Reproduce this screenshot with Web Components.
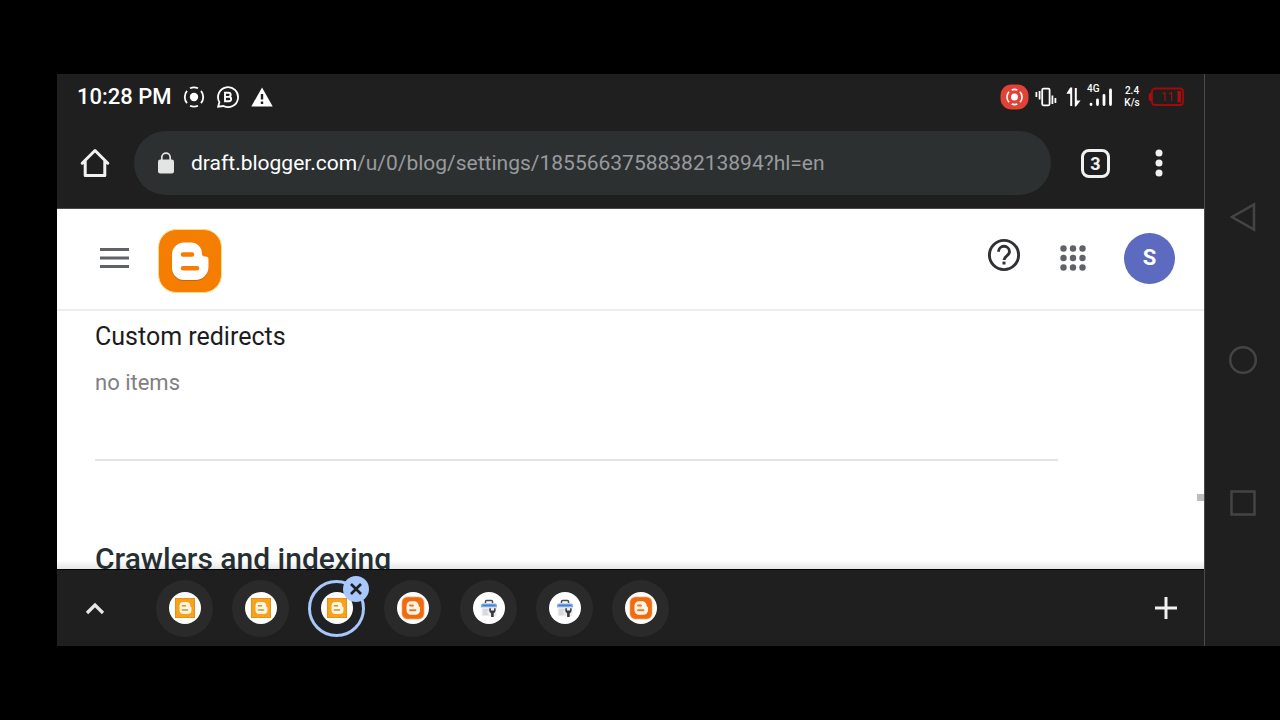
<!DOCTYPE html>
<html lang="en">
<head>
<meta charset="utf-8">
<meta name="viewport" content="width=device-width, initial-scale=1">
<title>Blogger settings</title>
<style>
html, body { margin: 0; height: 100%; background: #000; }
body { font-family: Roboto, "Liberation Sans", sans-serif; }
</style>
</head>
<body>
<phone-screen>
  <status-bar></status-bar>
  <browser-toolbar host="draft.blogger.com" path="/u/0/blog/settings/1855663758838213894?hl=en" tabs="3"></browser-toolbar>
  <blogger-page>
    <blogger-header slot="header" initial="S"></blogger-header>
    <setting-item heading="Custom redirects">no items</setting-item>
    <section-title>Crawlers and indexing</section-title>
  </blogger-page>
  <tab-strip>
    <tab-chip icon="draft" label="Blogger draft"></tab-chip>
    <tab-chip icon="draft" label="Blogger draft"></tab-chip>
    <tab-chip icon="draft" label="Blogger settings" selected></tab-chip>
    <tab-chip icon="blogger" label="Blogger"></tab-chip>
    <tab-chip icon="console" label="Search Console"></tab-chip>
    <tab-chip icon="console" label="Search Console"></tab-chip>
    <tab-chip icon="blogger" label="Blogger"></tab-chip>
  </tab-strip>
  <system-nav slot="nav"></system-nav>
</phone-screen>

<script>
const base = `
  :host, *, *::before, *::after { box-sizing: border-box; }
  button { font: inherit; color: inherit; background: none; border: 0; margin: 0; padding: 0; display: grid; place-items: center; cursor: pointer; }
  svg { display: block; }
`;

function define(name, render) {
  customElements.define(name, class extends HTMLElement {
    constructor() {
      super();
      this.attachShadow({ mode: 'open' });
    }
    connectedCallback() {
      const t = document.createElement('template');
      const [css, html] = render(this);
      t.innerHTML = `<style>${base}${css}</style>${html}`;
      this.shadowRoot.replaceChildren(t.content.cloneNode(true));
    }
  });
}

define('phone-screen', () => [`
  :host { display: flex; height: 100vh; padding: 74px 0 74px 57px; }
  main { flex: 1; min-width: 0; display: flex; flex-direction: column; background: #1f1f1f; }
`, `<main><slot></slot></main><slot name="nav"></slot>`]);

define('status-bar', () => [`
  :host { display: flex; align-items: center; justify-content: space-between; height: 46px; flex: none; padding: 0 20px; color: #fff; }
  div { display: flex; align-items: center; }
  .left { gap: 11px; }
  time { font-size: 22px; font-weight: 500; line-height: 28px; }
  .rate { display: block; font-size: 10px; line-height: 12px; font-weight: 500; text-align: center; width: 18px; margin: 0 7px 0 10px; }
  .vibrate { margin: 0 9px 0 6px; }
  .cell { position: relative; width: 26px; height: 24px; margin-left: 6px; }
  .cell span { position: absolute; top: -2px; left: 0; font-size: 10px; line-height: 12px; font-weight: 500; }
  .battery { position: relative; }
  .battery span { position: absolute; inset: 0 8px 0 11px; font-size: 12px; line-height: 20px; color: #a80b0b; text-align: center; }
`, `
  <div class="left">
    <time>10:28 PM</time>
    <svg width="22" height="22" viewBox="0 0 22 22" fill="none" stroke="#fff" stroke-width="1.8"><circle cx="11" cy="11" r="4.2" fill="#fff" stroke="none"/><path d="M7 2.200A9.700 9.700 0 0 1 15 2.200M18 4.800A9.700 9.700 0 0 1 18 17.200M15 19.800A9.700 9.700 0 0 1 7 19.800M4 4.800A9.700 9.700 0 0 0 4 17.200"/></svg>
    <svg width="24" height="24" viewBox="0 0 24 24" fill="none" stroke="#fff" stroke-width="1.8"><path d="M2.200 21.600l1.200-4.500A10 10 0 1 1 7.500 21z"/><path d="M9 7.800h3.600a2 2 0 0 1 0 4.100H9zM9 11.900h4a2.100 2.100 0 0 1 0 4.300H9z" stroke-width="1.9"/></svg>
    <svg width="22" height="20" viewBox="0 0 22 20"><path fill="#fff" d="M11 .5 21.700 19.400H.3z"/><path stroke="#1f1f1f" stroke-width="2.4" d="M11 7v5.500M11 14.500v2.400"/></svg>
  </div>
  <div>
    <svg width="29" height="26" viewBox="0 0 29 26"><rect x=".5" y=".5" width="28" height="25" rx="11" fill="#e04236"/><circle cx="14.5" cy="13" r="3.5" fill="#fff"/><g fill="none" stroke="#fff" stroke-width="1.600"><path d="M11.700 5.900a7.600 7.600 0 0 1 5.600 0M20 7.800a7.600 7.600 0 0 1 0 10.400M17.300 20.100a7.600 7.600 0 0 1-5.600 0M9 7.800a7.600 7.600 0 0 0 0 10.400"/></g></svg>
    <svg class="vibrate" width="22" height="20" viewBox="0 0 22 20" fill="none" stroke="#fff" stroke-width="1.8"><rect x="7.200" y="1.700" width="7.400" height="16.600" rx="1.200"/><path d="M1.400 5v5M4.600 4v8.500M17.400 8.500V17M20.400 11v5"/></svg>
    <svg width="15" height="20" viewBox="0 0 15 20" fill="#fff"><path d="M4.200.5h2V19h-2V6.800H.4zM8.800 1h2v12.400h3.800L10 19.500H8.800z"/></svg>
    <div class="cell"><span>4G</span><svg width="26" height="24" viewBox="0 0 26 24"><path fill="none" stroke="#fff" stroke-width="2.800" stroke-linecap="round" d="M4 19.200v.3M10.500 15v4.500M17 10.500v9M23.500 5v14.500"/></svg></div>
    <div class="rate">2.4<br>K/s</div>
    <div class="battery"><svg width="36" height="20" viewBox="0 0 36 20"><rect x="4" y="1.500" width="31" height="16.500" rx="3" fill="none" stroke="#9e0b0b" stroke-width="1.800"/><path d="M3.500 5.500H2.200L.8 7.500v5l1.400 1.800h1.300zM29.500 4H33v11.500h-3.500z" fill="#b40a0a"/></svg><span>11</span></div>
  </div>`]);

define('browser-toolbar', el => [`
  :host { display: flex; align-items: center; flex: none; height: 89px; padding: 0 20px 2px 13px; border-bottom: 1px solid #48494b; color: #f1f1f1; }
  .home { width: 50px; height: 50px; margin-right: 14px; }
  .omnibox { flex: 1; min-width: 0; height: 64px; border-radius: 32px; background: #2d3031; display: flex; align-items: center; gap: 17px; padding: 0 24px; }
  .url { font-size: 21px; line-height: 28px; white-space: nowrap; overflow: hidden; outline: 0; color: #989b9e; }
  .url b { font-weight: 400; color: #fff; }
  .count { width: 29px; height: 29px; margin: 0 35px 0 30px; border: 3px solid #f1f1f1; border-radius: 8px; font-size: 18px; line-height: 23px; font-weight: 700; }
  .more { width: 28px; height: 50px; margin-right: 11px; }
`, `
  <button class="home" aria-label="Home"><svg width="30" height="30" viewBox="0 0 30 30"><path fill="none" stroke="#f1f1f1" stroke-width="3" stroke-linejoin="round" stroke-linecap="round" d="M2.200 15.200 15 2.500 27.800 15.200M5.200 13v14.500h19.600V13"/></svg></button>
  <div class="omnibox">
    <svg width="16" height="22" viewBox="0 0 16 22"><rect y="7.500" width="16" height="14" rx="2.200" fill="#e4e4e4"/><path d="M3.800 8V5.300a4.200 4.200 0 0 1 8.400 0V8" fill="none" stroke="#e4e4e4" stroke-width="1.700"/></svg>
    <div class="url" role="textbox" contenteditable="true" spellcheck="false" aria-label="Address"><b>${el.getAttribute('host')}</b>${el.getAttribute('path')}</div>
  </div>
  <button class="count" aria-label="Open tabs">${el.getAttribute('tabs')}</button>
  <button class="more" aria-label="More options"><svg width="8" height="28" viewBox="0 0 8 28" fill="#f1f1f1"><circle cx="4" cy="4" r="3.500"/><circle cx="4" cy="14" r="3.500"/><circle cx="4" cy="24" r="3.500"/></svg></button>`]);

define('blogger-page', () => [`
  :host { display: block; flex: 1; min-height: 0; overflow: hidden; background: #fff; color: #202124; position: relative; }
  .thumb { position: absolute; right: 0; top: 79%; width: 7px; height: 7px; background: #bdbdbd; }
  .fade { position: absolute; left: 0; right: 0; bottom: 0; height: 10px; background: linear-gradient(rgba(0,0,0,0), rgba(0,0,0,.1)); border-bottom: 1px solid #000; }
  .content { padding: 0 38px; }
`, `<slot name="header"></slot><div class="content"><slot></slot></div><div class="thumb"></div><div class="fade"></div>`]);

define('blogger-header', el => [`
  :host { display: flex; align-items: center; height: 102px; padding: 0 29px 2px 38px; border-bottom: 2px solid #ededed; }
  .menu { width: 38px; height: 50px; }
  .logo { margin: 5px auto 0 25px; }
  .help { width: 50px; height: 50px; margin: 0 25px 6px 0; }
  .apps { width: 38px; height: 50px; margin-right: 32px; }
  .avatar { width: 51px; height: 51px; border-radius: 50%; background: #5c6bc0; color: #fff; font-size: 22px; line-height: 28px; font-weight: 700; }
`, `
  <button class="menu" aria-label="Main menu"><svg width="29" height="20" viewBox="0 0 29 20" fill="#5f6368"><path d="M0 0h29v3H0zM0 8.500h29v3H0zM0 17h29v3H0z"/></svg></button>
  <a class="logo" href="#" aria-label="Blogger"><svg width="64" height="64" viewBox="0 0 64 64"><rect x=".5" y=".5" width="63" height="63" rx="18" fill="#f57d00" stroke="#ffd98c"/><path d="M14 26.500A12 12 0 0 1 26 14.500h7a11 11 0 0 1 11 11c0 2 .8 3 2.800 3h.7a3 3 0 0 1 3 3V39a13 13 0 0 1-13 13H26a12 12 0 0 1-12-12z" fill="#c96500"/><path d="M14 25.500A12 12 0 0 1 26 13.500h7a11 11 0 0 1 11 11c0 2 .8 3 2.800 3h.7a3 3 0 0 1 3 3V38a13 13 0 0 1-13 13H26a12 12 0 0 1-12-12z" fill="#fff"/><path d="M25 25.500h9M25 39.300h14" stroke="#f57d00" stroke-width="4.600" stroke-linecap="round"/></svg></a>
  <button class="help" aria-label="Help"><svg width="34" height="34" viewBox="0 0 34 34"><circle cx="17" cy="17" r="14.600" fill="none" stroke="#303134" stroke-width="2.900"/><path d="M11.500 13.800a5.500 5.500 0 0 1 11 0c0 3.800-5.500 4.200-5.500 8.200" fill="none" stroke="#303134" stroke-width="2.900"/><path fill="#303134" d="M15.500 23.600h3v2.900h-3z"/></svg></button>
  <button class="apps" aria-label="Google apps"><svg width="26" height="26" viewBox="0 0 26 26" fill="#5f6368"><circle cx="3.500" cy="3.500" r="3.200"/><circle cx="13" cy="3.500" r="3.200"/><circle cx="22.500" cy="3.500" r="3.200"/><circle cx="3.500" cy="13" r="3.200"/><circle cx="13" cy="13" r="3.200"/><circle cx="22.500" cy="13" r="3.200"/><circle cx="3.500" cy="22.500" r="3.200"/><circle cx="13" cy="22.500" r="3.200"/><circle cx="22.500" cy="22.500" r="3.200"/></svg></button>
  <button class="avatar" aria-label="Account">${el.getAttribute('initial')}</button>`]);

define('setting-item', el => [`
  :host { display: block; padding: 10px 0 62px; margin-right: 108px; border-bottom: 2px solid #e4e4e4; }
  h3 { margin: 0 0 16px; font-size: 25px; line-height: 32px; font-weight: 400; color: #1c1c1e; }
  p { margin: 0; font-size: 22px; line-height: 28px; color: #808080; }
`, `<h3>${el.getAttribute('heading')}</h3><p><slot></slot></p>`]);

define('section-title', () => [`
  :host { display: block; padding-top: 80px; }
  h2 { margin: 0; font-size: 30px; line-height: 36px; font-weight: 500; white-space: nowrap; color: #263034; }
`, `<h2><slot></slot></h2>`]);

define('tab-strip', () => [`
  :host { display: flex; align-items: center; flex: none; height: 76px; padding: 0 14px; }
  button { width: 48px; height: 48px; }
  nav { display: flex; gap: 19px; margin: 0 auto 0 37px; }
`, `
  <button aria-label="Show all tabs"><svg width="20" height="13" viewBox="0 0 20 13"><path d="m2 11 8-8 8 8" fill="none" stroke="#e8e8e8" stroke-width="3.200"/></svg></button>
  <nav aria-label="Tabs"><slot></slot></nav>
  <button aria-label="New tab"><svg width="24" height="24" viewBox="0 0 24 24"><path d="M12 1v22M1 12h22" stroke="#f1f1f1" stroke-width="3"/></svg></button>`]);

const bMark = 'M-5.500-2a4 4 0 0 1 4-4h2.800a4 4 0 0 1 4 4q.1 1.200 1.200 1.200V2a4 4 0 0 1-4 4h-4a4 4 0 0 1-4-4z';
const favicons = {
  draft: `<rect x="6.500" y="6.500" width="19" height="19" fill="#f5a31f" stroke="#ee8f14"/><path transform="translate(16 16)" d="${bMark}" fill="#fff4dc"/><path d="M13.500 13.700h3M13.500 18h5" stroke="#c59240" stroke-width="1.600" stroke-linecap="round"/>`,
  blogger: `<rect x="5" y="5" width="22" height="22" rx="5.500" fill="#f06a10" stroke="#f9a45f" stroke-width=".7"/><path transform="translate(15.700 16) scale(1.130)" d="${bMark}" fill="#fff4e6"/><path d="M13 13.500h3M13 18.300h5.500" stroke="#ef741f" stroke-width="1.900" stroke-linecap="round"/>`,
  console: `<path d="M12.500 11V9.500q0-1 1-1h5q1 0 1 1V11" fill="none" stroke="#4a4c50" stroke-width="1.500"/><path d="M8 15.500v-2a2 2 0 0 1 2-2h12a2 2 0 0 1 2 2v2z" fill="#79aaf0"/><path d="M9.500 13.300h13" stroke="#3f72bf" stroke-width="1"/><path d="M8.500 15.500h15v8.500h-15z" fill="#ececec"/><path d="M10 18h5.500M10 20h4M10 22h5" stroke="#c3c6ca"/><path d="M16.300 16.300v2.400a3 3 0 0 0 1.800 2.500V25h2.600v-3.800a3 3 0 0 0 1.900-2.500v-2.400h-1.500v2.200h-3.200v-2.200z" fill="#37393d"/>`
};

define('tab-chip', el => [`
  :host { display: block; position: relative; }
  .tab { width: 57px; height: 57px; border-radius: 50%; background: #2a2a2a; }
  :host([selected]) .tab { background: #202124; border: 3px solid #a8c7fa; }
  .close { position: absolute; top: -4px; right: -4px; width: 26px; height: 26px; border-radius: 50%; background: #a8c7fa; }
`, `
  <button class="tab" aria-label="${el.getAttribute('label')}"><svg width="32" height="32" viewBox="0 0 32 32"><circle cx="16" cy="16" r="16" fill="#fff"/>${favicons[el.getAttribute('icon')]}</svg></button>
  ${el.hasAttribute('selected') ? '<button class="close" aria-label="Close tab"><svg width="12" height="12" viewBox="0 0 12 12"><path d="M1 1l10 10M11 1 1 11" stroke="#1f1f1f" stroke-width="2.600"/></svg></button>' : ''}`]);

define('system-nav', () => [`
  :host { display: flex; flex-direction: column; align-items: center; justify-content: center; gap: 87px; flex: none; width: 76px; background: #1f1f1f; border-left: 1px solid #4b4b4b; }
  button { width: 56px; height: 56px; }
  svg { fill: none; stroke: #444; stroke-width: 2.500; }
`, `
  <button aria-label="Back"><svg width="28" height="30" viewBox="0 0 28 30"><path d="M25 2.500v25L3 15z"/></svg></button>
  <button aria-label="Home"><svg width="30" height="30" viewBox="0 0 30 30"><circle cx="15" cy="15" r="12.800"/></svg></button>
  <button aria-label="Recent apps"><svg width="26" height="26" viewBox="0 0 26 26"><path d="M1.500 1.500h23v23h-23z"/></svg></button>`]);
</script>
</body>
</html>
